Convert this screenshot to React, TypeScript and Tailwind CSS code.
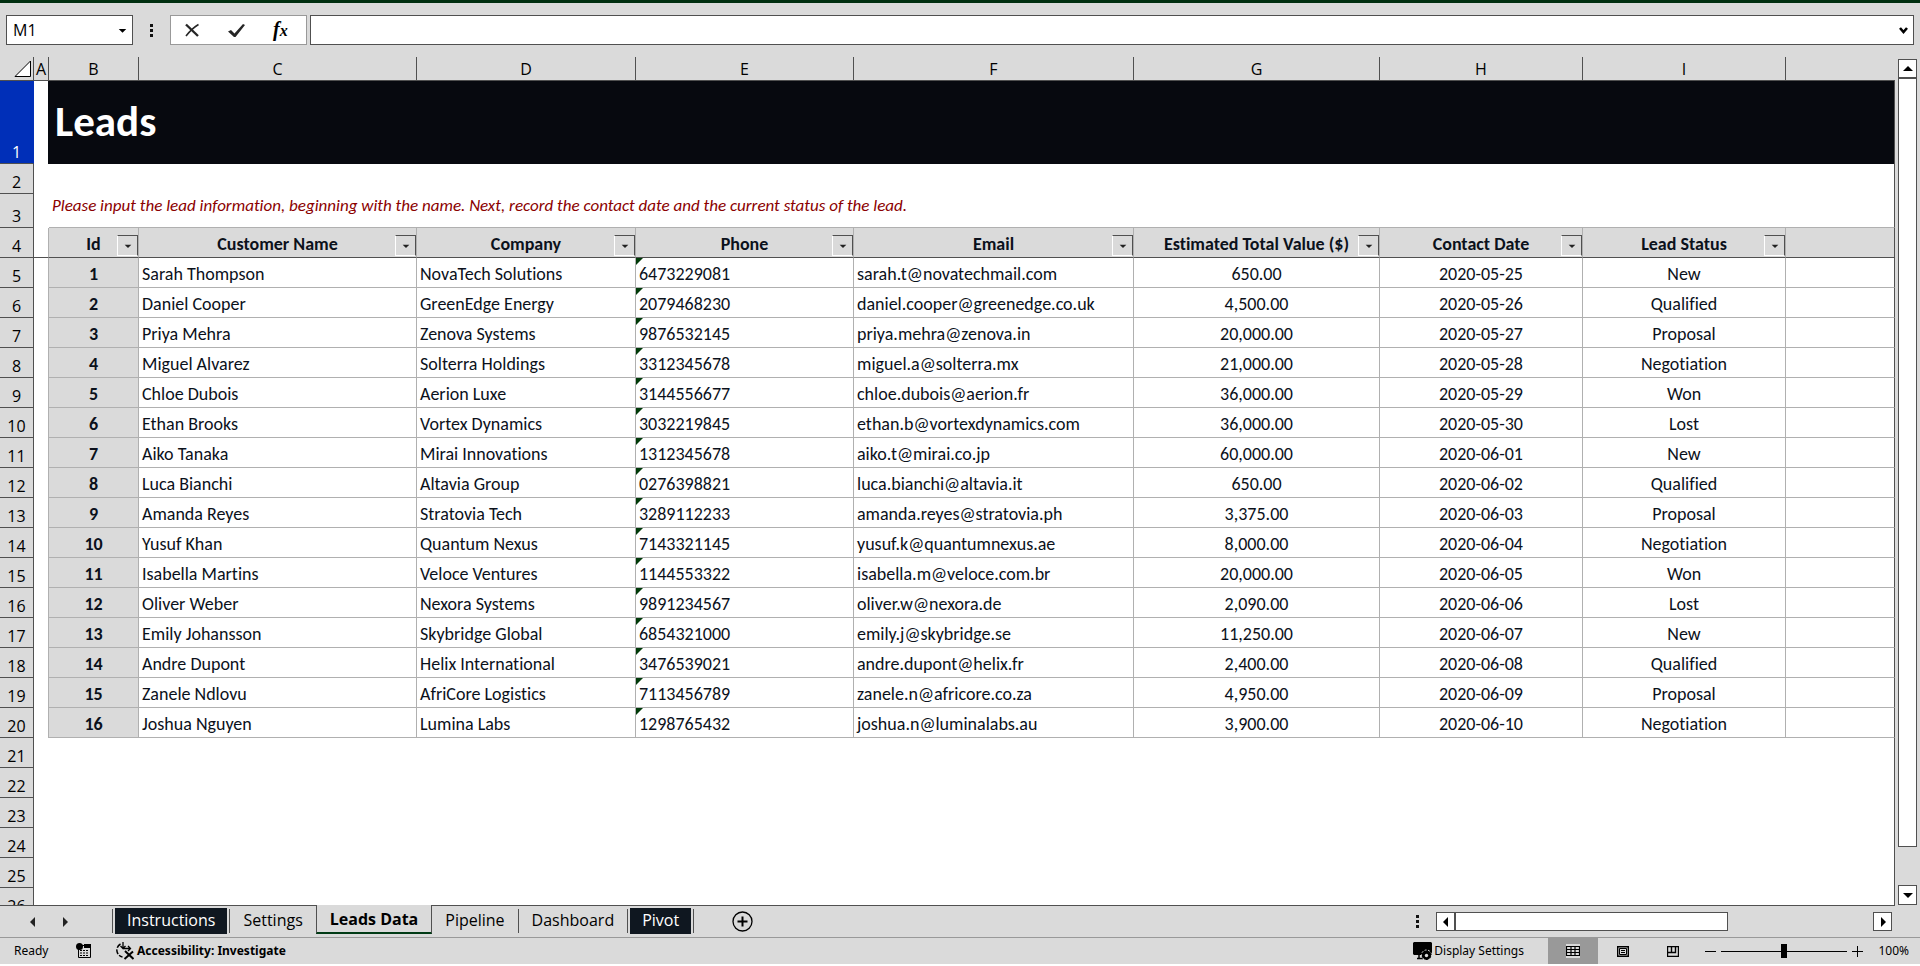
const columns = [
  { letter: "B", title: "Id", width: "w-[90px]" },
  { letter: "C", title: "Customer Name", width: "w-[278px]" },
  { letter: "D", title: "Company", width: "w-[219px]" },
  { letter: "E", title: "Phone", width: "w-[218px]" },
  { letter: "F", title: "Email", width: "w-[280px]" },
  { letter: "G", title: "Estimated Total Value ($)", width: "w-[246px]" },
  { letter: "H", title: "Contact Date", width: "w-[203px]" },
  { letter: "I", title: "Lead Status", width: "w-[203px]" },
];

const leads = [
  ["Sarah Thompson", "NovaTech Solutions", "6473229081", "sarah.t@novatechmail.com", "650.00", "2020-05-25", "New"],
  ["Daniel Cooper", "GreenEdge Energy", "2079468230", "daniel.cooper@greenedge.co.uk", "4,500.00", "2020-05-26", "Qualified"],
  ["Priya Mehra", "Zenova Systems", "9876532145", "priya.mehra@zenova.in", "20,000.00", "2020-05-27", "Proposal"],
  ["Miguel Alvarez", "Solterra Holdings", "3312345678", "miguel.a@solterra.mx", "21,000.00", "2020-05-28", "Negotiation"],
  ["Chloe Dubois", "Aerion Luxe", "3144556677", "chloe.dubois@aerion.fr", "36,000.00", "2020-05-29", "Won"],
  ["Ethan Brooks", "Vortex Dynamics", "3032219845", "ethan.b@vortexdynamics.com", "36,000.00", "2020-05-30", "Lost"],
  ["Aiko Tanaka", "Mirai Innovations", "1312345678", "aiko.t@mirai.co.jp", "60,000.00", "2020-06-01", "New"],
  ["Luca Bianchi", "Altavia Group", "0276398821", "luca.bianchi@altavia.it", "650.00", "2020-06-02", "Qualified"],
  ["Amanda Reyes", "Stratovia Tech", "3289112233", "amanda.reyes@stratovia.ph", "3,375.00", "2020-06-03", "Proposal"],
  ["Yusuf Khan", "Quantum Nexus", "7143321145", "yusuf.k@quantumnexus.ae", "8,000.00", "2020-06-04", "Negotiation"],
  ["Isabella Martins", "Veloce Ventures", "1144553322", "isabella.m@veloce.com.br", "20,000.00", "2020-06-05", "Won"],
  ["Oliver Weber", "Nexora Systems", "9891234567", "oliver.w@nexora.de", "2,090.00", "2020-06-06", "Lost"],
  ["Emily Johansson", "Skybridge Global", "6854321000", "emily.j@skybridge.se", "11,250.00", "2020-06-07", "New"],
  ["Andre Dupont", "Helix International", "3476539021", "andre.dupont@helix.fr", "2,400.00", "2020-06-08", "Qualified"],
  ["Zanele Ndlovu", "AfriCore Logistics", "7113456789", "zanele.n@africore.co.za", "4,950.00", "2020-06-09", "Proposal"],
  ["Joshua Nguyen", "Lumina Labs", "1298765432", "joshua.n@luminalabs.au", "3,900.00", "2020-06-10", "Negotiation"],
];

const emptyRows = [21, 22, 23, 24, 25, 26];

const UI_FONT = "font-['Segoe_UI','Open_Sans',sans-serif]";
const CELL_FONT = "font-['Calibri','Carlito','Lato',sans-serif]";

function Triangle({ dir, className = "size-3" }: { dir: "up" | "down" | "left" | "right"; className?: string }) {
  const points = {
    up: "1,8 11,8 6,3",
    down: "1,4 11,4 6,9",
    left: "8,1 8,11 3,6",
    right: "4,1 4,11 9,6",
  };
  return (
    <svg viewBox="0 0 12 12" className={className} fill="currentColor" aria-hidden="true">
      <polygon points={points[dir]} />
    </svg>
  );
}

function Dots() {
  return (
    <svg viewBox="0 0 3 13" className="h-[13px] w-[3px]" fill="#111" aria-hidden="true">
      <path d="M0 0h3v3H0zM0 5h3v3H0zM0 10h3v3H0z" />
    </svg>
  );
}

function FormulaBar() {
  return (
    <div className="flex items-center border-t-3 border-[#002f10] px-1.5 py-3">
      <div className="relative h-[30px] w-[127px] border border-[#505050] bg-white">
        <input
          aria-label="Name box"
          defaultValue="M1"
          className="size-full pl-1.5 text-base outline-none"
        />
        <button aria-label="Open name list" className="absolute inset-y-0 right-[5px] flex items-center">
          <Triangle dir="down" className="size-[9px]" />
        </button>
      </div>
      <div className="flex w-[37px] justify-center">
        <Dots />
      </div>
      <div className="flex h-[30px] w-[137px] items-center gap-7 border border-[#999] bg-white pl-[13px] text-[#262626]">
        <button aria-label="Cancel">
          <svg viewBox="0 0 16 16" className="size-4" fill="none" stroke="currentColor">
            <path d="M2 2.5 14 14" strokeWidth="2.4" />
            <path d="M14.5 2.5C10 5 6 9 2 14" strokeWidth="1.6" />
          </svg>
        </button>
        <button aria-label="Enter">
          <svg viewBox="0 0 17 14" className="h-3.5 w-[17px]" fill="currentColor">
            <path d="M0 8.5 3 7l3.5 3.5L15 1l2 1L7.500 14H6z" />
          </svg>
        </button>
        <button
          aria-label="Insert function"
          className="flex items-baseline font-['Liberation_Serif',serif] font-bold text-black italic"
        >
          <span className="text-xl leading-6">f</span>
          <span className="text-base leading-6">x</span>
        </button>
      </div>
      <div className="relative ml-[3px] h-[30px] flex-1 border border-[#505050] bg-white">
        <input aria-label="Formula bar" className="size-full px-2 text-base outline-none" />
        <button aria-label="Expand formula bar" className="absolute inset-y-0 right-[5px] flex items-center">
          <svg viewBox="0 0 9 7" className="h-[7px] w-[9px]" fill="none" stroke="#000" strokeWidth="2.6">
            <path d="M1 1l3.500 4L8 1" />
          </svg>
        </button>
      </div>
    </div>
  );
}

function RowHeader({ n, selected = false }: { n: number; selected?: boolean }) {
  return (
    <th
      scope="row"
      className={`border-r border-b p-0 text-center align-bottom text-base leading-[22px] font-normal ${UI_FONT} ${
        selected ? "border-[#002fb8] border-b-[#505050] bg-[#002fb8] text-white" : "border-[#505050] bg-[#dadada] text-black"
      }`}
    >
      {n}
    </th>
  );
}

function Sheet() {
  return (
    <table
      className={`w-full table-fixed border-separate border-spacing-0 bg-white text-lg leading-5 text-[#0b111b] [font-variant-ligatures:none] ${CELL_FONT}`}
    >
      <colgroup>
        <col className="w-[34px]" />
        <col className="w-[15px]" />
        {columns.map((c) => (
          <col key={c.letter} className={c.width} />
        ))}
        <col />
      </colgroup>
      <thead>
        <tr className={`h-6 bg-[#dadada] text-base leading-5 text-black ${UI_FONT}`}>
          <th className="border-r border-b border-[#505050] p-0">
            <button aria-label="Select all" className="block pl-3.5">
              <svg viewBox="0 0 18 18" className="size-[18px]" fill="#fff" stroke="#000">
                <path d="M1 16.500H16.500V1z" />
              </svg>
            </button>
          </th>
          <th scope="col" className="border-r border-b border-[#505050] p-0 font-normal">A</th>
          {columns.map((c) => (
            <th key={c.letter} scope="col" className="border-r border-b border-[#505050] p-0 font-normal">
              {c.letter}
            </th>
          ))}
          <th className="border-b border-[#505050] p-0" />
        </tr>
      </thead>
      <tbody>
        <tr className="h-[83px]">
          <RowHeader n={1} selected />
          <td className="border-r border-[#07090f]" />
          <td colSpan={9} className="border-r border-[#505050] bg-[#07090f] py-0 pl-1.5 text-white">
            <h1 className="pb-px text-[43px] leading-[48px] font-bold">Leads</h1>
          </td>
        </tr>
        <tr className="h-[30px]">
          <RowHeader n={2} />
          <td colSpan={10} className="border-r border-[#505050]" />
        </tr>
        <tr className="h-[34px]">
          <RowHeader n={3} />
          <td />
          <td colSpan={9} className="border-r border-b border-[#505050] border-b-[#b0b0b0] pt-0 pb-2.5 pl-[3px] text-[17px] text-[#8b0000] italic">
            Please input the lead information, beginning with the name. Next, record the contact date and the current status of the lead.
          </td>
        </tr>
        <tr className="h-[30px]">
          <RowHeader n={4} />
          <td className="border-r border-b border-r-[#b0b0b0] border-b-[#505050]" />
          {columns.map((c) => (
            <th
              key={c.letter}
              scope="col"
              className="relative border-r border-b border-r-[#b0b0b0] border-b-[#505050] bg-[#dadada] px-0 pt-0.5 pb-0"
            >
              {c.title}
              <button
                aria-label={`Filter ${c.title}`}
                className="absolute right-0 bottom-px flex size-[21px] items-center justify-center border border-t-[#505050] border-r-[#505050] border-b-white border-l-white bg-[#dadada] text-[#222]"
              >
                <Triangle dir="down" className="size-2" />
              </button>
            </th>
          ))}
          <td className="border-r border-b border-[#505050] bg-[#dadada]" />
        </tr>
        {leads.map((lead, i) => (
          <tr key={lead[0]} className="h-[30px]">
            <RowHeader n={i + 5} />
            <td className="border-r border-[#b0b0b0]" />
            <td className="border-r border-b border-[#b0b0b0] bg-[#dadada] p-0 pt-0.5 text-center font-bold">{i + 1}</td>
            {lead.map((value, j) => (
              <td
                key={j}
                className={`relative border-r border-b border-[#b0b0b0] p-0 pt-0.5 ${j < 4 ? "pl-[3px]" : "text-center"}`}
              >
                {/* numbers stored as text carry the green corner marker */}
                {j === 2 && (
                  <svg viewBox="0 0 7 7" className="absolute top-0 left-0 size-[7px]" fill="#003a08" aria-hidden="true">
                    <path d="M0 0h7L0 7z" />
                  </svg>
                )}
                {value}
              </td>
            ))}
            <td className="border-r border-b border-r-[#505050] border-b-[#b0b0b0]" />
          </tr>
        ))}
        {emptyRows.map((n) => (
          <tr key={n} className="h-[30px]">
            <RowHeader n={n} />
            <td colSpan={10} className="border-r border-[#505050]" />
          </tr>
        ))}
      </tbody>
    </table>
  );
}

function VerticalScroll() {
  return (
    <div className="flex w-[25px] flex-col items-center pt-0.5">
      <button aria-label="Scroll up" className="flex h-[19px] w-[19px] items-center justify-center border border-[#505050] bg-white">
        <Triangle dir="up" />
      </button>
      <div className="w-[19px] flex-1 pb-[38px]">
        <div className="h-full border border-[#505050] bg-white" />
      </div>
      <button aria-label="Scroll down" className="flex h-5 w-[19px] items-center justify-center border border-[#505050] bg-white">
        <Triangle dir="down" />
      </button>
    </div>
  );
}

function Divider() {
  return <span className="mt-[3px] h-6 w-px bg-[#505050]" />;
}

function Tab({ name, dark = false }: { name: string; dark?: boolean }) {
  return dark ? (
    <button className="mx-0.5 mt-0.5 h-[26px] bg-[#0f1720] px-3 pb-[3px] leading-5 text-white">{name}</button>
  ) : (
    <button className="mt-0.5 h-[26px] px-[13px] pb-[3px] leading-5">{name}</button>
  );
}

function TabBar() {
  return (
    <div className="flex h-8 items-start">
      <div className="flex h-full min-w-0 flex-1 items-start border-t border-[#505050]">
        <div className="flex w-28 items-center gap-5 pt-2.5 pl-[27px] text-[#222]">
          <button aria-label="Previous sheet"><Triangle dir="left" /></button>
          <button aria-label="Next sheet"><Triangle dir="right" /></button>
        </div>
        <Divider />
        <Tab name="Instructions" dark />
        <Divider />
        <Tab name="Settings" />
        <button className="-mt-px h-[29px] border-x border-b-2 border-[#505050] border-b-[#003a14] bg-[#dadada] px-[13px] font-bold">
          Leads Data
        </button>
        <Tab name="Pipeline" />
        <Divider />
        <Tab name="Dashboard" />
        <Divider />
        <Tab name="Pivot" dark />
        <Divider />
        <button aria-label="New sheet" className="mt-[5px] ml-[38px]">
          <svg viewBox="0 0 21 21" className="size-[21px]" fill="none" stroke="#000">
            <circle cx="10.500" cy="10.500" r="9.500" strokeWidth="1.300" />
            <path d="M5.500 10.500h10M10.500 5.500v10" strokeWidth="2" />
          </svg>
        </button>
        <div className="mt-1.5 ml-auto flex items-center">
          <Dots />
          <div className="ml-[17px] flex h-[19px] w-[456px]">
            <button aria-label="Scroll left" className="flex w-[19px] items-center justify-center border border-[#505050] bg-white">
              <Triangle dir="left" />
            </button>
            <div className="flex-1">
              <div className="h-full w-[273px] border border-[#505050] bg-white" />
            </div>
            <button aria-label="Scroll right" className="flex w-[19px] items-center justify-center border border-[#505050] bg-white">
              <Triangle dir="right" />
            </button>
          </div>
          <span className="w-[3px]" />
        </div>
      </div>
      <div className="w-[25px]" />
    </div>
  );
}

function StatusBar() {
  return (
    <div className="flex h-[27px] items-center border-t border-[#999] pr-[11px] pl-3.5 font-['Noto_Sans',sans-serif] text-xs">
      <span className="w-[62px]">Ready</span>
      <button aria-label="Record macro">
        <svg viewBox="0 0 16 16" className="size-4">
          <path d="M2.500 2.500h12v12h-12z" fill="none" stroke="#000" />
          <path d="M8 1h7v4H8z" />
          <circle cx="3.500" cy="3.500" r="3.500" />
          <path d="M4 7.500h9M4 10h9M4 12.500h9" stroke="#000" strokeDasharray="2 1" />
        </svg>
      </button>
      <button className="ml-[23px] flex items-center gap-[3px] font-bold">
        <svg viewBox="0 0 19 18" className="h-[18px] w-[19px]" fill="none" stroke="#000">
          <path d="M5.500 2A7 7 0 0 0 7.500 15" strokeWidth="1.500" strokeDasharray="5 1.500" />
          <path d="M8 0v6M5.500 4 8 6.500 10.500 4" strokeWidth="1.300" />
          <path d="M8 6.500h7M13 4l2.500 2.500L13 9" strokeWidth="1.300" />
          <path d="M10 9l8.500 8M18 9.500 9.500 17" strokeWidth="2" />
        </svg>
        Accessibility: Investigate
      </button>
      <button className="mr-6 ml-auto flex items-center gap-0.5">
        <svg viewBox="0 0 19 18" className="h-[18px] w-[19px]">
          <path d="M1 0h17l1 1v12H1l-1-1V1z" />
          <path d="M6 12v4M4 16.500h6" stroke="#000" strokeWidth="1.500" />
          <circle cx="13.500" cy="13" r="5" fill="#000" stroke="#dadada" strokeDasharray="2 1.500" />
          <path d="M13.500 9v9M9.500 11l8 4M17.500 11l-8 4" stroke="#000" strokeWidth="2" />
          <circle cx="13.500" cy="13.500" r="1.700" fill="#dadada" />
        </svg>
        Display Settings
      </button>
      <button aria-label="Normal view" className="flex h-full w-[50px] items-center justify-center bg-[#999]">
        <svg viewBox="0 0 14 14" className="size-3.5" stroke="#000" strokeWidth="1.200">
          <path d="M0 0h14v14H0z" fill="#dadada" stroke="none" />
          <path d="M.5 2.500h13v9H.5zM.5 5.500h13M.5 8.500h13M5 2.500v9M9 2.500v9" fill="none" />
        </svg>
      </button>
      <button aria-label="Page layout view" className="flex h-full w-[50px] items-center justify-center">
        <svg viewBox="0 0 12 11" className="h-[11px] w-3" fill="none" stroke="#000">
          <path d="M.7.700h10.600v9.600H.7z" strokeWidth="1.400" />
          <path d="M2.500 2.500h7v6h-7zM4 4.500h4M4 6.500h4" />
        </svg>
      </button>
      <button aria-label="Page break preview" className="flex h-full w-[50px] items-center justify-center">
        <svg viewBox="0 0 12 11" className="h-[11px] w-3" fill="none" stroke="#000">
          <path d="M.6.600h10.800v9.800H.6z" strokeWidth="1.200" />
          <path d="M1 6.500h7.500V1M4.500 1v5.500" strokeWidth="1.400" />
        </svg>
      </button>
      <button aria-label="Zoom out" className="ml-[7px]">
        <svg viewBox="0 0 11 11" className="size-[11px]" stroke="#000"><path d="M0 5.500h11" /></svg>
      </button>
      <input
        type="range"
        aria-label="Zoom"
        min={10}
        max={190}
        defaultValue={100}
        className="mx-[5px] h-3.5 w-[126px] appearance-none bg-[linear-gradient(#000,#000)] bg-[length:100%_1px] bg-center bg-no-repeat [&::-webkit-slider-thumb]:h-3.5 [&::-webkit-slider-thumb]:w-1.5 [&::-webkit-slider-thumb]:appearance-none [&::-webkit-slider-thumb]:bg-black"
      />
      <button aria-label="Zoom in">
        <svg viewBox="0 0 11 11" className="size-[11px]" stroke="#000"><path d="M0 5.500h11M5.500 0v11" /></svg>
      </button>
      <span className="ml-3.5 w-8 text-right">100%</span>
    </div>
  );
}

export default function App() {
  return (
    <div className={`flex h-screen flex-col bg-white pb-0.5 text-base text-black ${UI_FONT}`}>
      <div className="flex min-h-0 flex-1 flex-col bg-[#dadada]">
        <FormulaBar />
        <div className="flex min-h-0 flex-1">
          <div className="min-w-0 flex-1 overflow-hidden">
            <Sheet />
          </div>
          <VerticalScroll />
        </div>
        <TabBar />
        <StatusBar />
      </div>
    </div>
  );
}
